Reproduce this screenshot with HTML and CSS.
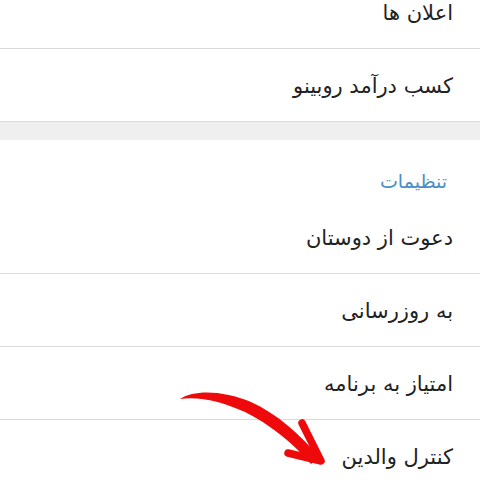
FILE: index.html
```html
<!DOCTYPE html>
<html lang="fa" dir="rtl">
<head>
<meta charset="utf-8">
<link rel="stylesheet" href="styles.css">
</head>
<body>
<div class="screen">
  <div class="group first">
    <div class="row">اعلان ها</div>
    <div class="divider"></div>
    <div class="row">کسب درآمد روبینو</div>
  </div>
  <div class="band"></div>
  <div class="group">
    <div class="header">تنظیمات</div>
    <div class="row">دعوت از دوستان</div>
    <div class="divider"></div>
    <div class="row">به روزرسانی</div>
    <div class="divider"></div>
    <div class="row">امتیاز به برنامه</div>
    <div class="divider"></div>
    <div class="row">کنترل والدین</div>
  </div>
  <svg class="arrow" width="480" height="484" viewBox="0 0 480 484">
    <path d="M180 399 C 195 389, 225 391, 251 402 C 277 414, 300 434, 319 457 L 311 464 C 292 442, 269 424, 245 412 C 221 401, 198 396, 180 399 Z" fill="#ee0a0a"/>
    <path d="M302 423 L 321 461 L 288 453" fill="none" stroke="#ee0a0a" stroke-width="7.5" stroke-linecap="round" stroke-linejoin="round"/>
  </svg>
</div>
</body>
</html>
```
FILE: styles.css
```css
html, body {
  margin: 0;
  padding: 0;
  background: #ffffff;
}
.screen {
  position: relative;
  width: 480px;
  height: 484px;
  overflow: hidden;
  font-family: "DejaVu Sans", "Noto Sans", sans-serif;
  direction: rtl;
}
.group {
  display: flex;
  flex-direction: column;
}
.group.first {
  margin-top: -24px;
}
.row {
  height: 72px;
  display: flex;
  align-items: center;
  padding-right: 27px;
  padding-top: 2px;
  box-sizing: border-box;
  font-size: 21px;
  color: #222222;
}
.divider {
  height: 1px;
  background: #dadada;
}
.band {
  height: 19px;
  background: #efefef;
  border-top: 1px solid #dcdcdc;
  box-sizing: border-box;
}
.header {
  height: 61px;
  display: flex;
  align-items: center;
  padding-right: 33px;
  padding-top: 20px;
  box-sizing: border-box;
  font-size: 19px;
  color: #4a8ec6;
}
.arrow {
  position: absolute;
  left: 0;
  top: 0;
  pointer-events: none;
}
```
